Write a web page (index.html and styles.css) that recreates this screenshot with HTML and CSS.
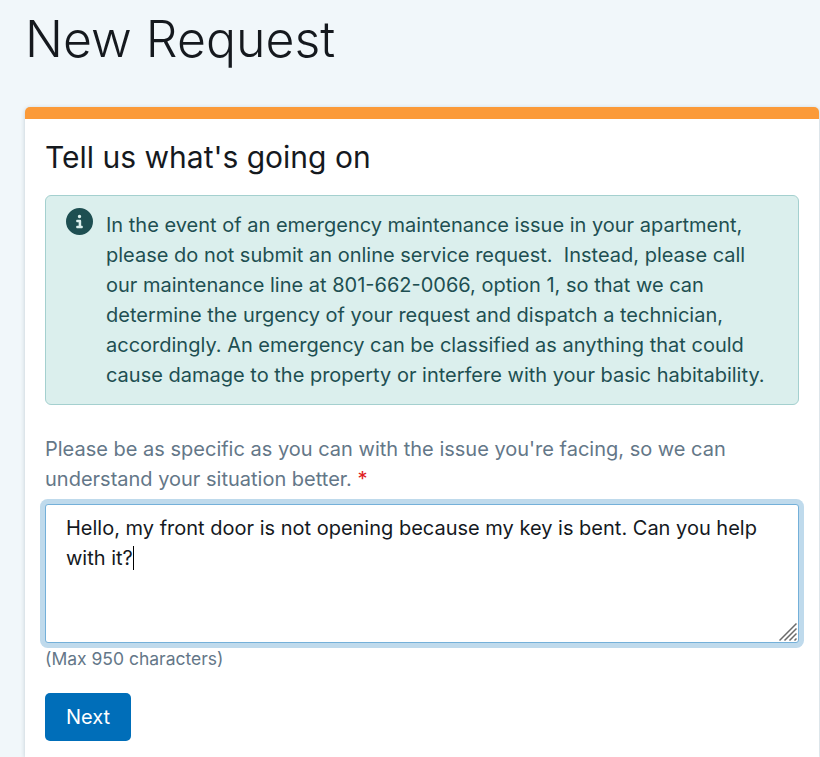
FILE: index.html
```html
<!DOCTYPE html>
<html lang="en">
<head>
<meta charset="utf-8">
<title>New Request</title>
<link rel="stylesheet" href="styles.css">
</head>
<body>
<h1 class="page-title">New Request</h1>
<main class="card">
  <h2 class="card-title">Tell us what's going on</h2>
  <div class="notice">
    <svg class="notice-icon" viewBox="0 0 512 512" aria-hidden="true"><path fill="currentColor" d="M256 512A256 256 0 1 0 256 0a256 256 0 1 0 0 512zM216 336h24V272H216c-13.300 0-24-10.700-24-24s10.700-24 24-24h48c13.300 0 24 10.700 24 24v88h8c13.300 0 24 10.700 24 24s-10.700 24-24 24H216c-13.300 0-24-10.700-24-24s10.700-24 24-24zm40-208a32 32 0 1 1 0 64 32 32 0 1 1 0-64z"/></svg>
    <p class="notice-text">In the event of an emergency maintenance issue in your apartment,<br>please do not submit an online service request.&nbsp; Instead, please call<br>our maintenance line at 801-662-0066, option 1, so that we can<br>determine the urgency of your request and dispatch a technician,<br>accordingly. An emergency can be classified as anything that could<br>cause damage to the property or interfere with your basic habitability.</p>
  </div>
  <div class="label">Please be as specific as you can with the issue you're facing, so we can<br>understand your situation better. <span class="required">*</span></div>
  <div class="field">Hello, my front door is not opening because my key is bent. Can you help<br>with it?<span class="caret"></span>
    <svg class="grip" viewBox="0 0 18 18" aria-hidden="true"><path d="M.5 17.500 17.500.5M5.500 17.500 17.500 5.500M10.500 17.500 17.500 10.500M15.500 17.500 17.500 15.500"/></svg>
  </div>
  <div class="hint">(Max 950 characters)</div>
  <button class="next" type="button">Next</button>
</main>
</body>
</html>
```
FILE: styles.css
```css
* { box-sizing: border-box; }
body {
  margin: 0;
  height: 757px;
  background: #f1f7fa;
  color: #15191e;
  font: 20px/30px Inter, sans-serif;
}
.page-title {
  margin: 0;
  padding: 9px 0 0 25px;
  height: 107px;
  font-size: 50px;
  line-height: 60px;
  font-weight: 300;
}
.card {
  margin: 0 1px 0 25px;
  height: 650px;
  padding: 20px 20px 0;
  border-top: 12px solid #fb9a38;
  border-radius: 5px 5px 0 0;
  background: #fff;
  box-shadow: 0 1px 4px rgba(30, 60, 80, .22);
}
.card-title {
  margin: 0 0 20px;
  font-size: 30px;
  line-height: 36px;
  font-weight: 400;
}
.notice {
  display: flex;
  height: 210px;
  padding: 14px 20px;
  border: 1px solid #a4d0cf;
  border-radius: 6px;
  background: #dbefed;
  color: #1e4f52;
}
.notice-icon {
  flex: none;
  width: 27px;
  height: 27px;
  margin: -2px 13px 0 0;
}
.notice-text { margin: 0; white-space: nowrap; }
.label {
  margin-top: 29px;
  color: #647788;
  white-space: nowrap;
}
.required { color: #e02020; }
.field {
  position: relative;
  height: 139px;
  margin-top: 10px;
  padding: 8px 20px;
  border: 1px solid #74b0d9;
  border-radius: 3px;
  background: #fff;
  box-shadow: 0 0 0 5px #bfdaec;
  white-space: nowrap;
}
.caret {
  display: inline-block;
  width: 1px;
  height: 24px;
  background: #000;
  vertical-align: -5px;
}
.grip {
  position: absolute;
  right: 1px;
  bottom: 1px;
  width: 18px;
  height: 18px;
  fill: none;
  stroke: #6b6b6b;
  stroke-width: 1.5;
}
.hint {
  margin-top: 4px;
  color: #647788;
  font-size: 17.5px;
  line-height: 24px;
}
.next {
  display: block;
  width: 86px;
  height: 48px;
  margin-top: 22px;
  padding: 0;
  border: 0;
  border-radius: 5px;
  background: #006eb9;
  color: #fff;
  font: 20px/30px Inter, sans-serif;
}
```
